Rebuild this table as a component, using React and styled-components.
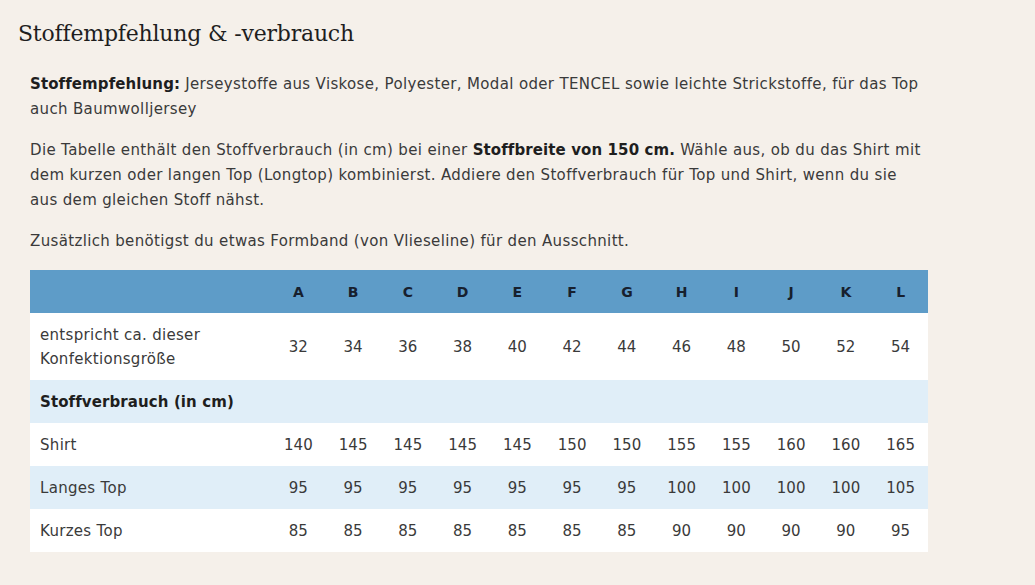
import React from "react";
import styled, { createGlobalStyle } from "styled-components";

const Global = createGlobalStyle`
  html, body { margin: 0; padding: 0; background: #f5f0ea; }
  body { font-family: "DejaVu Sans", "Noto Sans", sans-serif; color: #3a3a3a; }
`;

const Page = styled.div`
  padding: 19px 18px 30px 18px;
`;

const Title = styled.h2`
  margin: 0 0 23px 0;
  font-family: "DejaVu Serif", "Liberation Serif", serif;
  font-weight: normal;
  font-size: 22px;
  line-height: 30px;
  color: #1e1e1e;
  letter-spacing: -0.2px;
`;

const Body = styled.div`
  padding: 0 0 0 12px;
  width: 898px;
`;

const P = styled.p`
  margin: 0 0 16px 0;
  font-size: 15px;
  line-height: 25px;
  letter-spacing: 0.35px;
  color: #3a3a3a;
  b { font-weight: bold; color: #1e1e1e; letter-spacing: 0.1px; }
`;

const Table = styled.table`
  width: 898px;
  border-collapse: collapse;
  table-layout: fixed;
  margin-top: 16px;
  font-size: 15px;
`;

const HeadRow = styled.tr`
  background: #5e9cc8;
  height: 43px;
`;

const Row = styled.tr`
  background: ${(p) => (p.$tint ? "#e0eef8" : "#ffffff")};
  height: ${(p) => p.$h || 43}px;
`;

const Th = styled.th`
  font-weight: bold;
  color: #17202e;
  text-align: center;
  font-size: 14px;
  padding: 0;
`;

const Label = styled.td`
  padding: 0 10px;
  text-align: left;
  line-height: 24px;
  letter-spacing: 0.3px;
  color: #3a3a3a;
  font-weight: ${(p) => (p.$bold ? "bold" : "normal")};
  ${(p) => p.$bold && "color: #1e1e1e; letter-spacing: 0.1px;"}
`;

const Cell = styled.td`
  padding: 0;
  text-align: center;
  color: #3a3a3a;
`;

const sizes = ["A", "B", "C", "D", "E", "F", "G", "H", "I", "J", "K", "L"];
const konf = [32, 34, 36, 38, 40, 42, 44, 46, 48, 50, 52, 54];
const rows = [
  { label: "Shirt", vals: [140, 145, 145, 145, 145, 150, 150, 155, 155, 160, 160, 165] },
  { label: "Langes Top", vals: [95, 95, 95, 95, 95, 95, 95, 100, 100, 100, 100, 105], tint: true },
  { label: "Kurzes Top", vals: [85, 85, 85, 85, 85, 85, 85, 90, 90, 90, 90, 95] },
];

export default function App() {
  return (
    <Page>
      <Global />
      <Title>Stoffempfehlung &amp; -verbrauch</Title>
      <Body>
        <P>
          <b>Stoffempfehlung:</b> Jerseystoffe aus Viskose, Polyester, Modal oder TENCEL sowie leichte
          Strickstoffe, für das Top auch Baumwolljersey
        </P>
        <P>
          Die Tabelle enthält den Stoffverbrauch (in cm) bei einer <b>Stoffbreite von 150 cm.</b> Wähle
          aus, ob du das Shirt mit dem kurzen oder langen Top (Longtop) kombinierst. Addiere den
          Stoffverbrauch für Top und Shirt, wenn du sie aus dem gleichen Stoff nähst.
        </P>
        <P>Zusätzlich benötigst du etwas Formband (von Vlieseline) für den Ausschnitt.</P>
        <Table>
          <colgroup>
            <col style={{ width: 241 }} />
            {sizes.map((s) => (
              <col key={s} />
            ))}
          </colgroup>
          <thead>
            <HeadRow>
              <Th />
              {sizes.map((s) => (
                <Th key={s}>{s}</Th>
              ))}
            </HeadRow>
          </thead>
          <tbody>
            <Row $h={67}>
              <Label>entspricht ca. dieser Konfektionsgröße</Label>
              {konf.map((v, i) => (
                <Cell key={i}>{v}</Cell>
              ))}
            </Row>
            <Row $tint>
              <Label $bold colSpan={13}>Stoffverbrauch (in cm)</Label>
            </Row>
            {rows.map((r) => (
              <Row key={r.label} $tint={r.tint}>
                <Label>{r.label}</Label>
                {r.vals.map((v, i) => (
                  <Cell key={i}>{v}</Cell>
                ))}
              </Row>
            ))}
          </tbody>
        </Table>
      </Body>
    </Page>
  );
}
